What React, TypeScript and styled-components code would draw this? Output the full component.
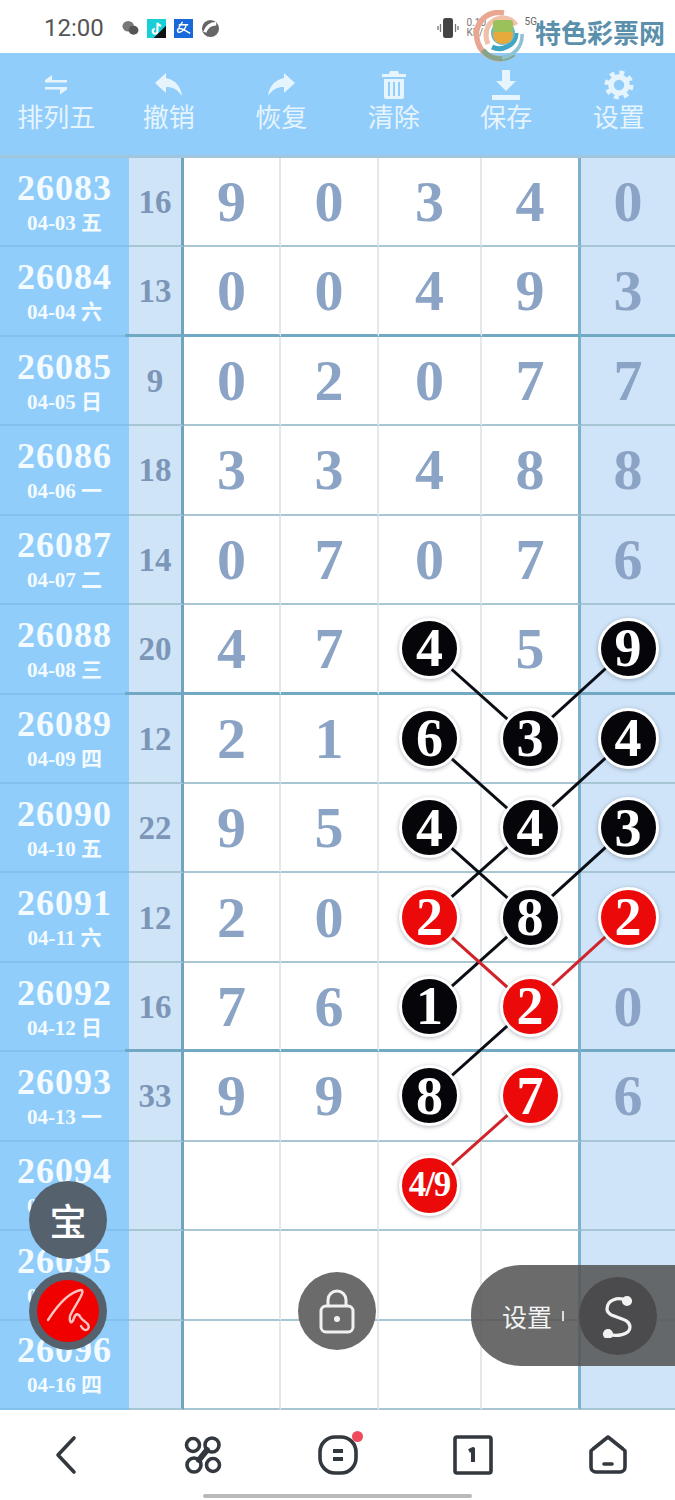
import React from 'react'
import styled, { createGlobalStyle } from 'styled-components'

const GlobalStyle = createGlobalStyle`
  html, body { margin: 0; padding: 0; background: #fff; }
  #root { width: 675px; height: 1500px; overflow: hidden; }
`

const SERIF = `"Liberation Serif", "Noto Sans CJK SC", serif`
const SANS = `"Noto Sans CJK SC", "Noto Sans", sans-serif`

const Page = styled.div`
  position: relative;
  width: 675px;
  height: 1500px;
  overflow: hidden;
  display: flex;
  flex-direction: column;
  background: #fff;
`

const StatusBar = styled.div`
  height: 53px;
  flex: none;
  display: flex;
  align-items: center;
  padding: 3px 0 0 44px;
  box-sizing: border-box;
  gap: 17px;
  background: #fff;
`

const Clock = styled.div`
  font: 400 24px "Roboto", sans-serif;
  color: #555;
`

const StatusIcons = styled.div`
  display: flex;
  align-items: center;
  gap: 8px;
`

const StatusRight = styled.div`
  margin-left: auto;
  display: flex;
  align-items: center;
  gap: 8px;
  padding-right: 138px;
`

const Speed = styled.div`
  font: 400 10px/10px "Roboto", sans-serif;
  color: #777;
  width: 26px;
`

const Network = styled.div`
  font: 400 10px "Roboto", sans-serif;
  color: #666;
  margin: -14px 0 0 24px;
`

const Watermark = styled.div`
  position: absolute;
  left: 474px;
  top: 10px;
  width: 201px;
  height: 52px;
  display: flex;
  align-items: center;
  z-index: 6;
`

const WatermarkText = styled.div`
  font: 700 26px ${SANS};
  color: #5a90ab;
  margin-left: 9px;
  margin-top: -9px;
  white-space: nowrap;
  text-shadow: 0 0 2px #fff;
`

const Toolbar = styled.div`
  height: 102px;
  flex: none;
  display: grid;
  grid-template-columns: repeat(6, 112.5px);
  background: #90cdfb;
`

const ToolItem = styled.div`
  display: flex;
  flex-direction: column;
  align-items: center;
  padding-top: 17px;
  color: #e6f4fe;
`

const ToolIcon = styled.svg<{ $ring?: boolean }>`
  width: 30px;
  height: 30px;
  fill: ${(p) => (p.$ring ? 'none' : 'currentColor')};
`

const ToolLabel = styled.div`
  font: 400 26px/30px ${SANS};
  margin-top: 1px;
  white-space: nowrap;
`

const Board = styled.div`
  position: relative;
  height: 1255px;
  flex: none;
  padding-top: 3px;
  box-sizing: border-box;
  background: #9fc6dd;
`

const Grid = styled.div`
  display: grid;
  grid-template-columns: 129px 55px 97px 98px 103px 99px 94px;
  grid-template-rows: repeat(14, 1fr);
  height: 1252px;
`

const Cell = styled.div<{ $strong?: boolean }>`
  position: relative;
  display: flex;
  align-items: center;
  justify-content: center;
  box-sizing: border-box;
  border-bottom: ${(p) => (p.$strong ? '3px solid #71a8c4' : '2px solid #a8c5d4')};
  background-clip: padding-box;
`

const LeadCell = styled(Cell)`
  flex-direction: column;
  background: #90cdfb;
  color: #f4fbff;
  border-bottom-color: #83c0ee;
  border-bottom-width: 2px;
  padding-top: 3px;

  ${(p) =>
    p.$strong &&
    `
    &::after {
      content: '';
      position: absolute;
      right: 0;
      bottom: -2px;
      width: 4px;
      height: 3px;
      background: #71a8c4;
    }
  `}
`

const LeadIssue = styled.div`
  font: 700 36px/32px ${SERIF};
  letter-spacing: 1px;
`

const LeadDate = styled.div`
  font: 700 21px/24px ${SERIF};
  margin-top: 7px;
  white-space: nowrap;
`

const SumCell = styled(Cell)`
  background: #d0e4f8;
  border-right: 3px solid #6ea5c0;
  color: #7c96b8;
  font: 700 33px ${SERIF};
  padding-top: 2px;
`

const NumberCell = styled(Cell)<{ $shade?: boolean; $wall?: boolean }>`
  background: ${(p) => (p.$shade ? '#cfe4f8' : '#fff')};
  border-right: ${(p) => (p.$wall ? '3px solid #7db0cd' : p.$shade ? 'none' : '2px solid #e3e9eb')};
  color: #8ba4c5;
  font: 700 58px ${SERIF};
`

const Ball = styled.div<{ $red?: boolean; $small?: boolean }>`
  position: relative;
  z-index: 2;
  width: 55px;
  height: 55px;
  border-radius: 50%;
  display: flex;
  align-items: center;
  justify-content: center;
  flex: none;
  background: ${(p) => (p.$red ? '#ec0909' : '#05050a')};
  color: #fff;
  font: 700 ${(p) => (p.$small ? '35px' : '54px')} ${SERIF};
  letter-spacing: ${(p) => (p.$small ? '-1px' : '0')};
  border: 3px solid #fff;
  box-shadow: 0 1px 4px rgba(60, 70, 90, 0.4);
`

const Links = styled.svg`
  position: absolute;
  left: 0;
  top: 2px;
  z-index: 1;
  pointer-events: none;
`

const FloatCircle = styled.div<{ $x: number; $y: number; $bg: string }>`
  position: absolute;
  left: ${(p) => p.$x - 39}px;
  top: ${(p) => p.$y - 39}px;
  width: 78px;
  height: 78px;
  border-radius: 50%;
  background: ${(p) => p.$bg};
  display: flex;
  align-items: center;
  justify-content: center;
  z-index: 5;
  color: #fff;
`

const BaoGlyph = styled.span`
  font: 500 37px ${SANS};
  color: #fff;
`

const RedDisc = styled.div`
  width: 62px;
  height: 62px;
  border-radius: 50%;
  background: #f10000;
  display: flex;
  align-items: center;
  justify-content: center;
`

const SidePill = styled.div`
  position: absolute;
  left: 471px;
  top: 1265px;
  width: 204px;
  height: 101px;
  border-radius: 50px 0 0 50px;
  background: rgba(85, 85, 85, 0.87);
  display: flex;
  align-items: center;
  padding-left: 31px;
  box-sizing: border-box;
  z-index: 5;
`

const PillLabel = styled.span`
  font: 400 25px ${SANS};
  color: #f2f2f2;
  margin-top: 1px;
`

const PillTick = styled.span`
  width: 2px;
  height: 10px;
  background: #ddd;
  margin-left: 10px;
`

const PillKnob = styled.div`
  width: 78px;
  height: 78px;
  border-radius: 50%;
  background: #4b4b4d;
  margin-left: 15px;
  display: flex;
  align-items: center;
  justify-content: center;
`

const BottomNav = styled.div`
  height: 90px;
  flex: none;
  display: grid;
  grid-template-columns: repeat(5, 135px);
  background: #fff;
  position: relative;
  z-index: 3;
`

const NavItem = styled.div`
  position: relative;
  display: flex;
  align-items: center;
  justify-content: center;
  height: 88px;
  padding-top: 1px;
`

const NavSvg = styled.svg`
  width: 40px;
  height: 40px;
  fill: none;
  stroke: #33383f;
  stroke-width: 3.6;
  stroke-linecap: round;
  stroke-linejoin: round;
`

const Dot = styled.span`
  position: absolute;
  left: 82px;
  top: 21px;
  width: 11px;
  height: 11px;
  border-radius: 50%;
  background: #ee4b5c;
`

const HomeBar = styled.div`
  position: absolute;
  left: 203px;
  bottom: 2px;
  width: 269px;
  height: 4px;
  border-radius: 2px;
  background: #b9b9b9;
`

type Row = { issue: string; date: string; sum?: string; cells: string[]; strong?: boolean }

const rows: Row[] = [
  { issue: '26083', date: '04-03 五', sum: '16', cells: ['9', '0', '3', '4', '0'] },
  { issue: '26084', date: '04-04 六', sum: '13', cells: ['0', '0', '4', '9', '3'], strong: true },
  { issue: '26085', date: '04-05 日', sum: '9', cells: ['0', '2', '0', '7', '7'] },
  { issue: '26086', date: '04-06 一', sum: '18', cells: ['3', '3', '4', '8', '8'] },
  { issue: '26087', date: '04-07 二', sum: '14', cells: ['0', '7', '0', '7', '6'] },
  { issue: '26088', date: '04-08 三', sum: '20', cells: ['4', '7', 'b4', '5', 'b9'], strong: true },
  { issue: '26089', date: '04-09 四', sum: '12', cells: ['2', '1', 'b6', 'b3', 'b4'] },
  { issue: '26090', date: '04-10 五', sum: '22', cells: ['9', '5', 'b4', 'b4', 'b3'] },
  { issue: '26091', date: '04-11 六', sum: '12', cells: ['2', '0', 'r2', 'b8', 'r2'] },
  { issue: '26092', date: '04-12 日', sum: '16', cells: ['7', '6', 'b1', 'r2', '0'], strong: true },
  { issue: '26093', date: '04-13 一', sum: '33', cells: ['9', '9', 'b8', 'r7', '6'] },
  { issue: '26094', date: '04-14 二', cells: ['', '', 'r4/9', '', ''] },
  { issue: '26095', date: '04-15 三', cells: ['', '', '', '', ''] },
  { issue: '26096', date: '04-16 四', cells: ['', '', '', '', ''] },
]

const COL_X = [429, 529, 627]
const rowY = (i: number) => 45 + i * 89.4

// [from column, from row, to column, to row, red]
const links: [number, number, number, number, boolean][] = [
  [0, 5, 1, 6, false],
  [2, 5, 1, 6, false],
  [0, 6, 1, 7, false],
  [2, 6, 1, 7, false],
  [0, 7, 1, 8, false],
  [1, 7, 0, 8, false],
  [2, 7, 1, 8, false],
  [1, 8, 0, 9, false],
  [0, 8, 1, 9, true],
  [2, 8, 1, 9, true],
  [1, 9, 0, 10, false],
  [1, 10, 0, 11, true],
]

const renderValue = (value: string) => {
  if (value[0] === 'b' || value[0] === 'r') {
    const text = value.slice(1)
    return <Ball $red={value[0] === 'r'} $small={text.length > 1}>{text}</Ball>
  }
  return value
}

const WeChatIcon = () => (
  <svg width="18" height="16" viewBox="0 0 20 18">
    <ellipse cx="8" cy="7" rx="6.5" ry="6" fill="#777" />
    <ellipse cx="14" cy="11.5" rx="5.5" ry="5" fill="#555" />
  </svg>
)

const TikTokIcon = () => (
  <svg width="19" height="19" viewBox="0 0 20 20">
    <rect width="20" height="20" fill="#111" />
    <path d="M0 0h20v7L7 20H0z" fill="#19cfd6" />
    <path d="M11 4v9a2.500 2.500 0 1 1-2.500-2.500M11 4c.5 2 2 3 4 3.200" fill="none" stroke="#fff" strokeWidth="2.200" />
  </svg>
)

const AlipayIcon = () => (
  <svg width="19" height="19" viewBox="0 0 20 20">
    <rect width="20" height="20" fill="#1a69d8" />
    <path d="M9 3 5 9M5 6h10M13 6c-1 4-3 7-7 8-3 0-3-4 0-4 4 0 7 3 11 5" fill="none" stroke="#fff" strokeWidth="1.500" />
  </svg>
)

const RoundIcon = () => (
  <svg width="19" height="19" viewBox="0 0 20 20">
    <circle cx="10" cy="10" r="9" fill="#666" />
    <path d="M4 14C6 8 10 5 16 5" stroke="#fff" strokeWidth="3.500" fill="none" />
  </svg>
)

const VibrateIcon = () => (
  <svg width="22" height="22" viewBox="0 0 22 22">
    <rect x="6" y="1" width="10" height="20" rx="2.500" fill="#444" />
    <path d="M3.500 7v8M1 9v4M18.500 7v8M21 9v4" stroke="#777" strokeWidth="1.300" />
  </svg>
)

const SwirlLogo = () => (
  <svg width="52" height="52" viewBox="0 0 52 52" fill="none">
    <path d="M30 3C12 0 0 14 3 29c2 12 12 20 25 20" stroke="#e9a692" strokeWidth="5.500" />
    <path d="M9 40c6 9 20 12 31 4" stroke="#84a58c" strokeWidth="5" />
    <path d="M28 48c12-2 21-12 20-24" stroke="#8cc2d2" strokeWidth="3.500" />
    <path d="M14 34C9 22 14 9 28 8c6 0 11 2 14 7" stroke="#f0c0a8" strokeWidth="5" />
    <path d="M18 37c10 5 24-2 24-14" stroke="#3fa5c4" strokeWidth="5" />
    <circle cx="29" cy="23" r="12" fill="#5fb9d8" />
    <rect x="19" y="10" width="20" height="13" rx="3" fill="#9bc25a" />
    <path d="M19 22h20v4a10 8 0 0 1-20 0z" fill="#e8a93c" />
  </svg>
)

const App: React.FC = () => (
  <Page>
    <GlobalStyle />
    <StatusBar>
      <Clock>12:00</Clock>
      <StatusIcons>
        <WeChatIcon />
        <TikTokIcon />
        <AlipayIcon />
        <RoundIcon />
      </StatusIcons>
      <StatusRight>
        <VibrateIcon />
        <Speed>0.10 KB/s</Speed>
        <Network>5G</Network>
      </StatusRight>
    </StatusBar>
    <Watermark>
      <SwirlLogo />
      <WatermarkText>特色彩票网</WatermarkText>
    </Watermark>

    <Toolbar>
      <ToolItem>
        <ToolIcon viewBox="0 0 30 30">
          <path d="M4 11h22v2.600H4zM4 11l7-5v5zM4 18h22v2.600H4zM26 20.600l-7 5v-5z" transform="translate(0 -1)" />
        </ToolIcon>
        <ToolLabel>排列五</ToolLabel>
      </ToolItem>
      <ToolItem>
        <ToolIcon viewBox="0 0 30 30">
          <path d="M12 3 1 13l11 10v-6c7 0 11 2 16 9-1-9-6-16-16-18z" />
        </ToolIcon>
        <ToolLabel>撤销</ToolLabel>
      </ToolItem>
      <ToolItem>
        <ToolIcon viewBox="0 0 30 30">
          <path d="M18 3l11 10-11 10v-6C11 17 7 19 2 26c1-9 6-16 16-18z" />
        </ToolIcon>
        <ToolLabel>恢复</ToolLabel>
      </ToolItem>
      <ToolItem>
        <ToolIcon viewBox="0 0 30 30">
          <path d="M11 1h8l1 3h7v3H3V4h7zM5 9h20v18a2 2 0 0 1-2 2H7a2 2 0 0 1-2-2zm4 3v14h2V12zm5 0v14h2V12zm5 0v14h2V12z" fillRule="evenodd" />
        </ToolIcon>
        <ToolLabel>清除</ToolLabel>
      </ToolItem>
      <ToolItem>
        <ToolIcon viewBox="0 0 30 30">
          <path d="M11 0h8v11h6L15 21 5 11h6zM1 25h28v5H1z" />
        </ToolIcon>
        <ToolLabel>保存</ToolLabel>
      </ToolItem>
      <ToolItem>
        <ToolIcon $ring viewBox="0 0 30 30" stroke="currentColor">
          <circle cx="15" cy="15" r="8" strokeWidth="5.500" />
          <circle cx="15" cy="15" r="12" strokeWidth="5" strokeDasharray="4.700 4.725" />
        </ToolIcon>
        <ToolLabel>设置</ToolLabel>
      </ToolItem>
    </Toolbar>

    <Board>
      <Grid>
        {rows.map((row) => (
          <React.Fragment key={row.issue}>
            <LeadCell $strong={row.strong}>
              <LeadIssue>{row.issue}</LeadIssue>
              <LeadDate>{row.date}</LeadDate>
            </LeadCell>
            <SumCell $strong={row.strong}>{row.sum}</SumCell>
            {row.cells.map((value, i) => (
              <NumberCell key={i} $strong={row.strong} $wall={i === 3} $shade={i === 4}>
                {renderValue(value)}
              </NumberCell>
            ))}
          </React.Fragment>
        ))}
      </Grid>
      <Links width="675" height="1253" viewBox="0 0 675 1253">
        {links.map(([c1, r1, c2, r2, red]) => (
          <line
            key={`${c1}-${r1}-${c2}-${r2}`}
            x1={COL_X[c1]}
            y1={rowY(r1)}
            x2={COL_X[c2]}
            y2={rowY(r2)}
            stroke={red ? '#d2232a' : '#0a0d14'}
            strokeWidth="3"
          />
        ))}
      </Links>
    </Board>

    <FloatCircle $x={68} $y={1220} $bg="#56616e">
      <BaoGlyph>宝</BaoGlyph>
    </FloatCircle>
    <FloatCircle $x={68} $y={1311} $bg="#56616e">
      <RedDisc>
        <svg width="46" height="46" viewBox="0 0 46 46" fill="none" stroke="#fbc4c0" strokeWidth="2.400" strokeLinecap="round" strokeLinejoin="round">
          <path d="M3 32C12 18 24 4 36 2c6 0-8 18-11 26-1 8 2 8 4 2 2-6 5-4 7 0 3 4 10 6 7 11-3 3-6-1-7-3" />
        </svg>
      </RedDisc>
    </FloatCircle>
    <FloatCircle $x={337} $y={1311} $bg="#6b6b6b">
      <svg width="38" height="46" viewBox="0 0 38 46" fill="none" stroke="#f1f1f1" strokeWidth="3">
        <rect x="3" y="18" width="32" height="26" rx="5" />
        <path d="M10 18v-6a9 9 0 0 1 18 0v6" />
        <circle cx="19" cy="31" r="3" fill="#f1f1f1" stroke="none" />
      </svg>
    </FloatCircle>
    <SidePill>
      <PillLabel>设置</PillLabel>
      <PillTick />
      <PillKnob>
        <svg width="32" height="44" viewBox="0 0 32 44" fill="none" stroke="#f2f2f2" strokeWidth="3.200" strokeLinecap="round">
          <path d="M25 7C16 2 5 6 5 15c0 10 23 7 23 18 0 8-14 10-22 7" />
          <circle cx="25" cy="7" r="3.500" fill="#f2f2f2" />
          <circle cx="6" cy="40" r="3.500" fill="#f2f2f2" />
        </svg>
      </PillKnob>
    </SidePill>

    <BottomNav>
      <NavItem>
        <NavSvg viewBox="0 0 40 40">
          <path d="M26 3 10 20l16 17" />
        </NavSvg>
      </NavItem>
      <NavItem>
        <NavSvg viewBox="0 0 40 40">
          <circle cx="10" cy="10" r="6.500" />
          <circle cx="30" cy="30" r="6.500" />
          <circle cx="29" cy="10" r="7" />
          <circle cx="11" cy="30" r="7" />
          <path d="M24 15 16 25" strokeWidth="6" />
        </NavSvg>
      </NavItem>
      <NavItem>
        <NavSvg viewBox="0 0 40 40">
          <rect x="2" y="2" width="36" height="36" rx="15" />
          <path d="M15 16h10M15 24h10" strokeWidth="4" strokeLinecap="butt" />
        </NavSvg>
        <Dot />
      </NavItem>
      <NavItem>
        <NavSvg viewBox="0 0 40 40">
          <rect x="2" y="2" width="36" height="36" rx="2" />
          <path d="M16 16l4-2v13" strokeWidth="4" strokeLinecap="butt" />
        </NavSvg>
      </NavItem>
      <NavItem>
        <NavSvg viewBox="0 0 40 40">
          <path d="M20 2 35 14a4 4 0 0 1 2 4v14a5 5 0 0 1-5 5H8a5 5 0 0 1-5-5V18a4 4 0 0 1 2-4z" />
          <path d="M16 29h8" />
        </NavSvg>
      </NavItem>
      <HomeBar />
    </BottomNav>
  </Page>
)

export default App
